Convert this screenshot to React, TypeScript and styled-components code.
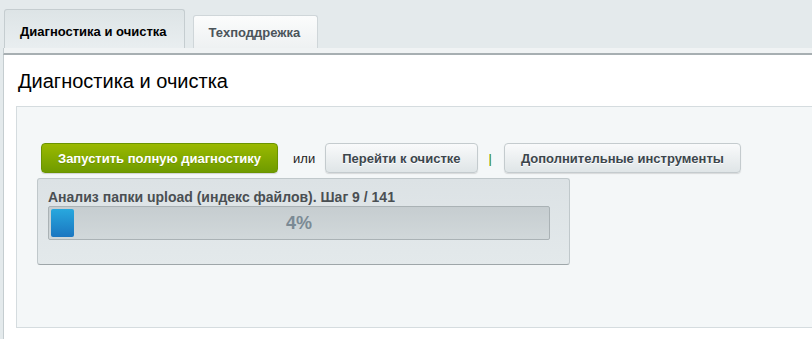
import React from 'react';
import styled, {createGlobalStyle} from "styled-components";

const GlobalStyle = createGlobalStyle`
  html, body {
    margin: 0;
    padding: 0;
    background: #e4eaec;
    font-family: "Liberation Sans", Arial, sans-serif;
  }
`

const Page = styled.div`
  width: 812px;
  height: 339px;
  overflow: hidden;
  background: #e4eaec;
`

const TabBar = styled.div`
  display: flex;
  align-items: flex-end;
  gap: 8px;
  height: 48px;
  padding-left: 4px;
  box-sizing: border-box;
`

type TabProps = {
    $active?: boolean
}

const Tab = styled.div<TabProps>`
  display: flex;
  align-items: center;
  box-sizing: border-box;
  height: ${({$active}) => $active ? '39px' : '33px'};
  padding: ${({$active}) => $active ? '4px 17px 0 15px' : '0 17px 0 15px'};
  border: 1px solid ${({$active}) => $active ? '#c5cdd0' : '#cfd6d9'};
  border-bottom: none;
  border-radius: 3px 3px 0 0;
  background: ${({$active}) => $active
          ? 'linear-gradient(to bottom, #dde4e6, #e9eef0)'
          : 'linear-gradient(to bottom, #fbfcfc, #eef1f2)'};
  font-size: 13px;
  font-weight: bold;
  color: ${({$active}) => $active ? '#000' : '#4b545a'};
`

const TabStrip = styled.div`
  height: 5px;
  margin-left: 3px;
  background: #f0f3f4;
  border-left: 1px solid #c5cdd0;
  border-bottom: 2px solid #a7afb2;
`

const Content = styled.div`
  margin-left: 3px;
  background: #fff;
  border-left: 1px solid #c5cdd0;
  padding: 14px 0 0 12px;
  height: 300px;
`

const Heading = styled.h1`
  margin: 0 0 13px 2px;
  font-size: 20px;
  font-weight: normal;
  line-height: 24px;
  color: #000;
`

const Panel = styled.div`
  background: #f4f7f8;
  border: 1px solid #d5dcdf;
  border-right: none;
  padding: 36px 0 62px 20px;
`

const ButtonRow = styled.div`
  display: flex;
  align-items: center;
  padding-left: 4px;
`

type ButtonProps = {
    $primary?: boolean
}

const Button = styled.button<ButtonProps>`
  box-sizing: border-box;
  height: 30px;
  padding: 0 16px;
  border-radius: 4px;
  font-family: inherit;
  font-size: 13px;
  font-weight: bold;
  cursor: pointer;
  border: 1px solid ${({$primary}) => $primary ? '#6b9400' : '#c4cbce'};
  color: ${({$primary}) => $primary ? '#fff' : '#3c464c'};
  background: ${({$primary}) => $primary
          ? 'linear-gradient(to bottom, #9ab900, #6f9b00)'
          : 'linear-gradient(to bottom, #f9fafb, #dfe5e7)'};
  box-shadow: ${({$primary}) => $primary ? '0 1px 1px rgba(0,0,0,0.15)' : '0 1px 1px rgba(0,0,0,0.12)'};
  text-shadow: ${({$primary}) => $primary ? '0 1px 0 rgba(0,0,0,0.15)' : '0 1px 0 #fff'};
`

const Or = styled.span`
  margin: 0 10px 0 15px;
  font-size: 13px;
  color: #222;
`

const Divider = styled.span`
  margin: 0 12px 0 11px;
  font-size: 13px;
  color: #2e8a00;
`

const ProgressBox = styled.div`
  box-sizing: border-box;
  width: 533px;
  margin-top: 5px;
  padding: 10px 19px 24px 10px;
  background: linear-gradient(to bottom, #dce2e5, #e3e9eb);
  border: 1px solid #c0c8cb;
  border-bottom-color: #9ea6a9;
  border-radius: 3px;
`

const ProgressTitle = styled.div`
  font-size: 14px;
  font-weight: bold;
  line-height: 17px;
  color: #4a4f53;
`

const ProgressTrack = styled.div`
  position: relative;
  box-sizing: border-box;
  height: 34px;
  padding: 2px;
  background: linear-gradient(to bottom, #c6cdd0, #d1d8da);
  border: 1px solid #aab2b5;
  border-radius: 2px;
`

const ProgressFill = styled.div`
  height: 100%;
  min-width: 23px;
  border-radius: 2px;
  background: linear-gradient(to bottom, #28a8de, #1b76c0);
`

const ProgressLabel = styled.div`
  position: absolute;
  inset: 0;
  display: flex;
  align-items: center;
  justify-content: center;
  font-size: 18px;
  font-weight: bold;
  color: #7b8a94;
`

const App = () => {
    const step = 9;
    const total = 141;
    const percent = 4;

    return (
        <Page>
            <GlobalStyle/>
            <TabBar>
                <Tab $active>Диагностика и очистка</Tab>
                <Tab>Техподдрежка</Tab>
            </TabBar>
            <TabStrip/>
            <Content>
                <Heading>Диагностика и очистка</Heading>
                <Panel>
                    <ButtonRow>
                        <Button $primary>Запустить полную диагностику</Button>
                        <Or>или</Or>
                        <Button>Перейти к очистке</Button>
                        <Divider>|</Divider>
                        <Button>Дополнительные инструменты</Button>
                    </ButtonRow>
                    <ProgressBox>
                        <ProgressTitle>Анализ папки upload (индекс файлов). Шаг {step} / {total}</ProgressTitle>
                        <ProgressTrack>
                            <ProgressFill style={{width: `${percent}%`}}/>
                            <ProgressLabel>{percent}%</ProgressLabel>
                        </ProgressTrack>
                    </ProgressBox>
                </Panel>
            </Content>
        </Page>
    );
};

export default App;
